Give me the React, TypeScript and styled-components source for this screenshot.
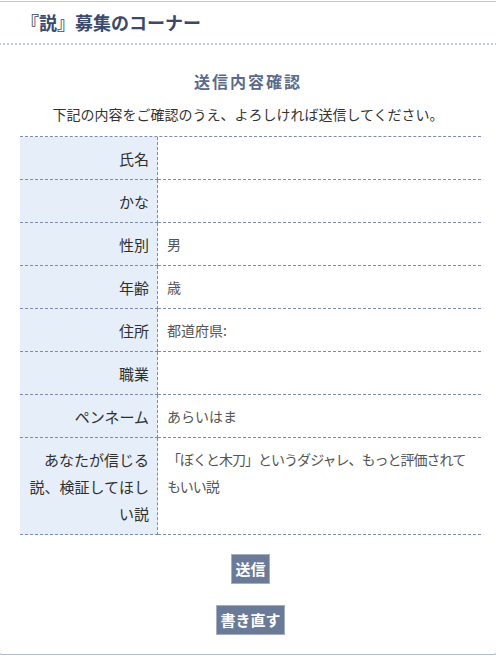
import React from "react";
import styled, { createGlobalStyle } from "styled-components";

const GlobalStyle = createGlobalStyle`
  html, body {
    margin: 0;
    padding: 0;
    background: #fff;
    overflow: hidden;
  }
  body {
    font-family: "Noto Sans CJK JP", "Noto Sans", sans-serif;
    color: #333;
  }
`;

const Frame = styled.div`
  box-sizing: border-box;
  margin: 1px 0 0 -5px;
  width: 506px;
  height: 654px;
  border: 1px solid #b4bccb;
  border-top-color: #c4c4c4;
  border-radius: 0 0 8px 8px;
  display: flex;
  flex-direction: column;
  align-items: center;
`;

const Header = styled.h1`
  align-self: stretch;
  margin: 0;
  padding-left: 25px;
  height: 41px;
  line-height: 41px;
  font-size: 18px;
  font-weight: bold;
  color: #3b4a6b;
  border-bottom: 2px dotted #c3cad8;
`;

const Title = styled.h2`
  margin: 24px 0 0;
  font-size: 16px;
  line-height: 24px;
  font-weight: bold;
  letter-spacing: 2px;
  color: #5b6a8b;
`;

const Lead = styled.p`
  margin: 11px 0 0;
  font-size: 14px;
  line-height: 20px;
  color: #333;
`;

const Table = styled.dl`
  align-self: flex-start;
  margin: 12px 0 0 24px;
  width: 461px;
  display: grid;
  grid-template-columns: 138px 1fr;
  border-top: 1px dashed #7d8cab;
`;

const Label = styled.dt`
  box-sizing: border-box;
  padding: 7.5px 8px 7.5px 4px;
  background: #e6eef9;
  border-right: 1px dashed #7d8cab;
  border-bottom: 1px dashed #7d8cab;
  font-size: 15px;
  line-height: 27px;
  color: #2e2e2e;
  display: flex;
  align-items: center;
  justify-content: flex-end;
  text-align: right;
`;

const Value = styled.dd<{ $tight?: boolean }>`
  margin: 0;
  padding: 7.5px 10px 7.5px 9px;
  border-bottom: 1px dashed #7d8cab;
  font-size: 14px;
  line-height: 27px;
  color: #555;
  letter-spacing: ${(props) => (props.$tight ? "-1px" : "0")};
`;

const Actions = styled.div`
  margin: 19px 0 0 5px;
  display: flex;
  flex-direction: column;
  align-items: center;
  gap: 21px;
`;

const Button = styled.button`
  box-sizing: border-box;
  height: 30px;
  padding: 0 3px;
  border: 1px solid #a3aec2;
  background: #6b7a96;
  color: #fff;
  font-family: inherit;
  font-size: 15px;
  font-weight: bold;
  line-height: 28px;
  cursor: pointer;
`;

const rows: { label: string; value: string }[] = [
  { label: "氏名", value: "" },
  { label: "かな", value: "" },
  { label: "性別", value: "男" },
  { label: "年齢", value: "歳" },
  { label: "住所", value: "都道府県:" },
  { label: "職業", value: "" },
  { label: "ペンネーム", value: "あらいはま" },
  {
    label: "あなたが信じる説、検証してほしい説",
    value: "「ぼくと木刀」というダジャレ、もっと評価されてもいい説",
  },
];

const App: React.FC = () => {
  return (
    <>
      <GlobalStyle />
      <Frame>
        <Header>『説』募集のコーナー</Header>
        <Title>送信内容確認</Title>
        <Lead>下記の内容をご確認のうえ、よろしければ送信してください。</Lead>
        <Table>
          {rows.map((row) => (
            <React.Fragment key={row.label}>
              <Label>{row.label}</Label>
              <Value $tight={row.value.length > 20}>{row.value}</Value>
            </React.Fragment>
          ))}
        </Table>
        <Actions>
          <Button type="button">送信</Button>
          <Button type="button">書き直す</Button>
        </Actions>
      </Frame>
    </>
  );
};

export default App;
